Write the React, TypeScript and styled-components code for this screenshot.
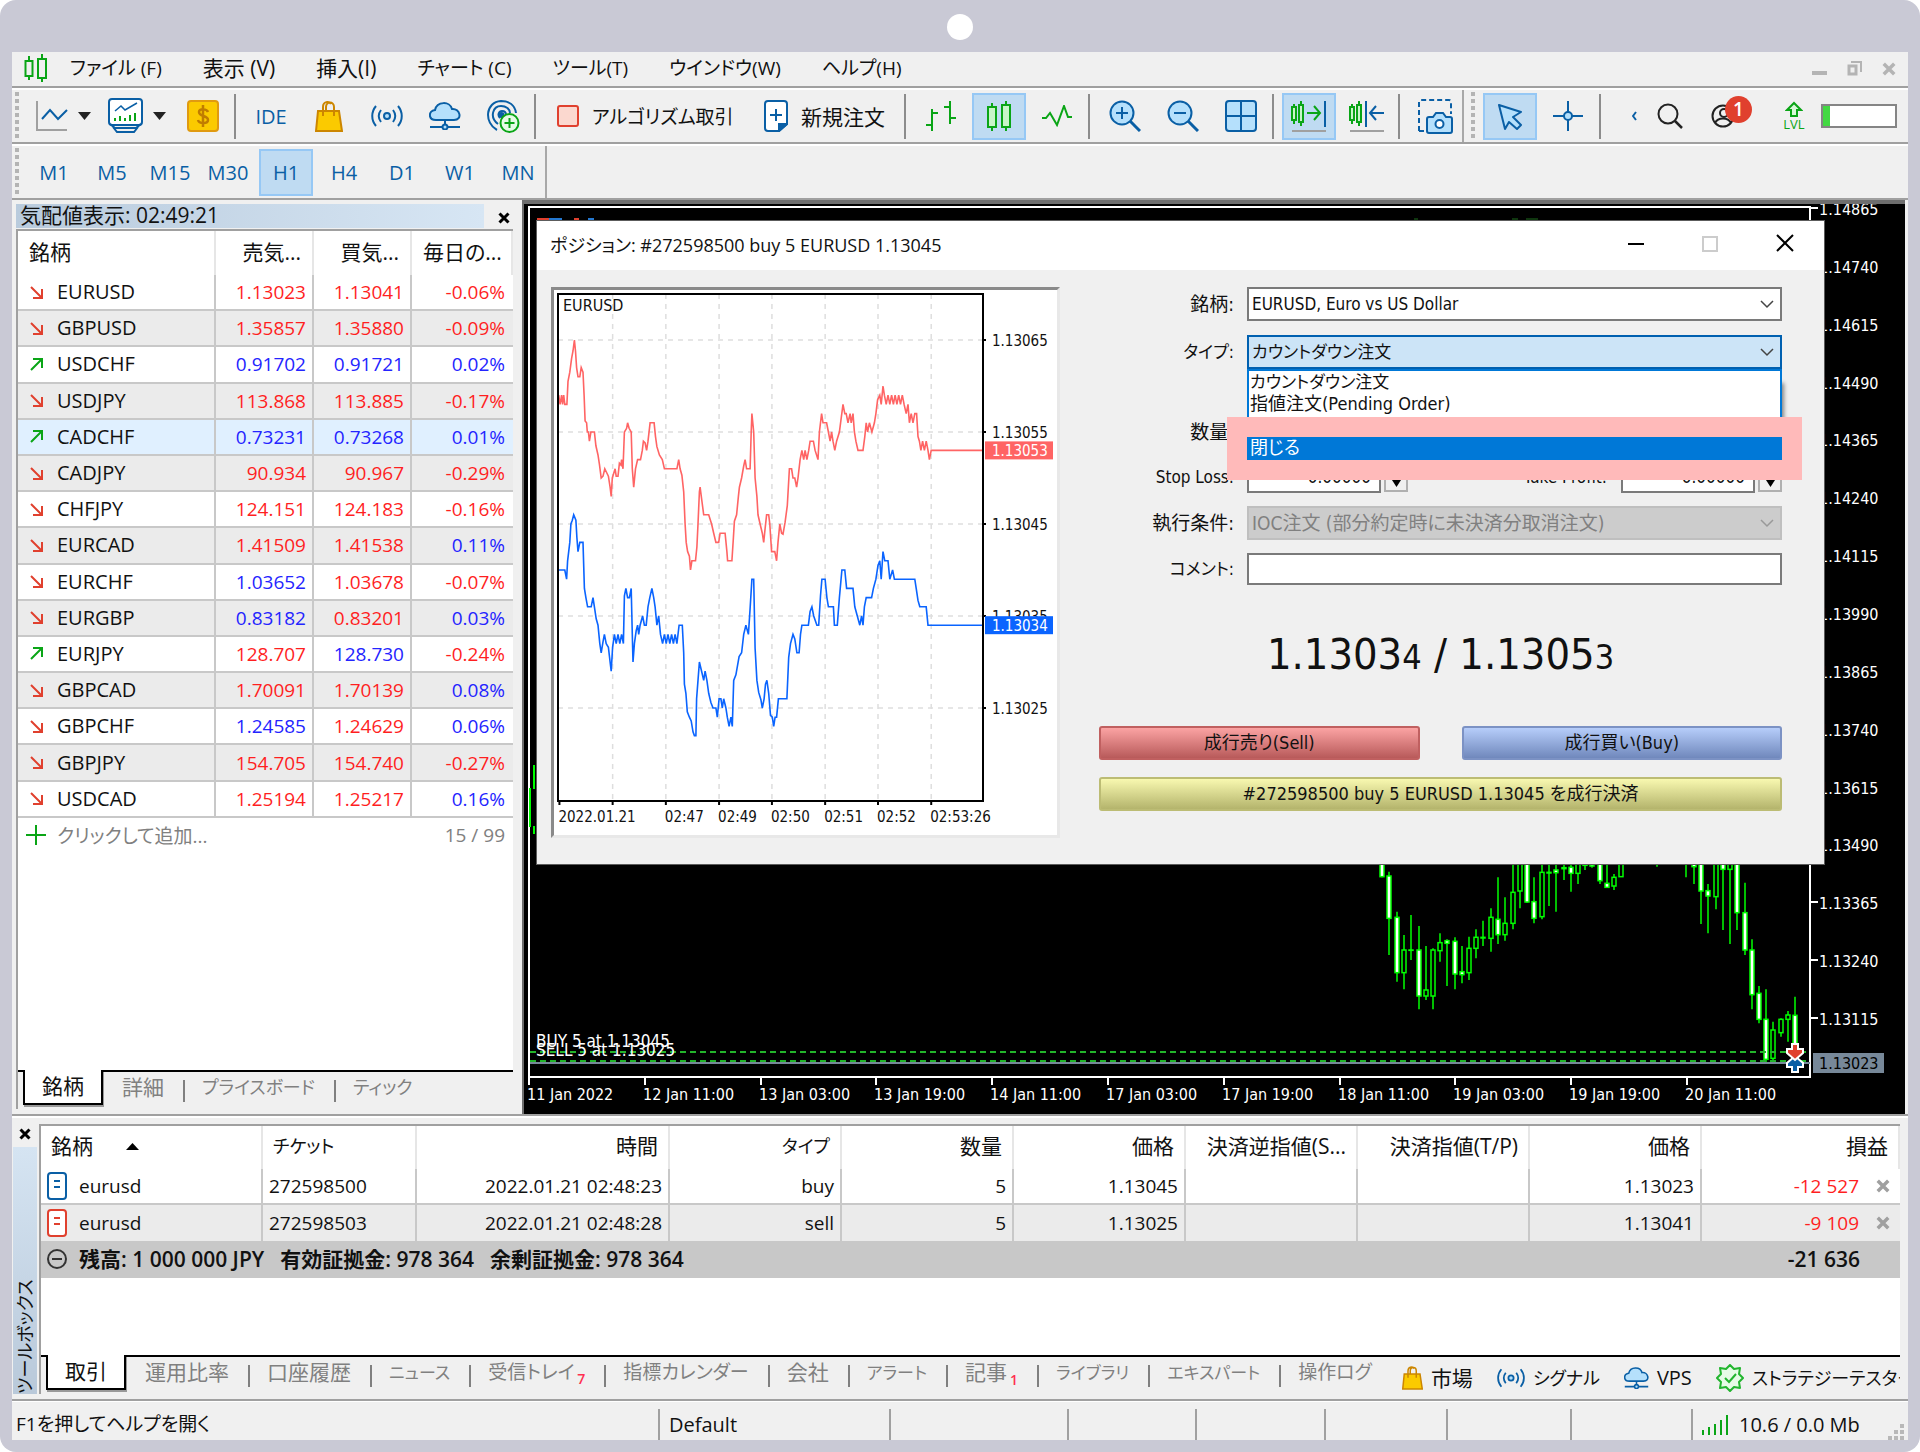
import React, { useState } from 'react';
import styled, { createGlobalStyle, css } from 'styled-components';

const UI_FONT = '"Open Sans", "Noto Sans CJK JP", sans-serif';
const DIALOG_FONT = '"DejaVu Sans Condensed", "Noto Sans", "Noto Sans CJK JP", sans-serif';
const BLUE = '#0a5fa5';
const SKY = '#b5e0fc';
const GREEN = '#0aa516';
const RED = '#e0402e';
const FACE = '#f0f0f0';

/* Kana labels are set smaller than kanji labels, mixed ones in between. */
const labelSize = (text: string, kanaSize = 18) => {
  const kana = /[\u30a0-\u30ff]/.test(text);
  const kanji = /[\u4e00-\u9fff]/.test(text);
  if (kana && kanji) return 19;
  return kana ? kanaSize : 21;
};

const GlobalStyle = createGlobalStyle`
  * { box-sizing: border-box; }
  body { margin: 0; background: #fff; font-family: ${UI_FONT}; font-size: 20px; color: #111; font-feature-settings: "palt"; }
  button, input, select { font: inherit; color: inherit; font-feature-settings: inherit; }
  button { padding: 0; border: 0; background: none; cursor: pointer; }
  ul { margin: 0; padding: 0; list-style: none; }
`;

/* ---------- frame ---------- */

const Device = styled.div`
  display: flex;
  flex-direction: column;
  background: #c9c9d5;
  border-radius: 16px;
  padding: 0 12px 12px;
`;
const Camera = styled.div`
  width: 26px;
  height: 26px;
  margin: 14px auto 12px;
  border-radius: 50%;
  background: #fff;
`;
const Window = styled.main`
  background: ${FACE};
`;

/* ---------- menu ---------- */

const MenuBar = styled.header`
  display: flex;
  align-items: center;
  height: 36px;
  padding: 0 12px 2px;
  border-bottom: 2px solid #a0a0a0;
`;
const MenuNav = styled.nav`
  display: flex;
  flex: 1;
  align-items: center;
  gap: 41px;
  margin-left: 22px;
`;
const MenuItem = styled.button<{ $size: number }>`
  font-size: ${p => p.$size}px;
  line-height: 32px;
  white-space: nowrap;
`;
const WindowControls = styled.div`
  display: flex;
  gap: 20px;
`;

/* ---------- toolbars ---------- */

const ToolBar = styled.div`
  display: flex;
  align-items: center;
  gap: 4px;
  height: 56px;
  border-top: 2px solid #fff;
  border-bottom: 2px solid #a0a0a0;
`;
const Grip = styled.span<{ $compact?: boolean }>`
  width: 4px;
  height: 48px;
  margin: 0 ${p => (p.$compact ? 4 : 9)}px 0 3px;
  background: repeating-linear-gradient(#b4b4b4 0 4px, transparent 4px 7px);
`;
const Divider = styled.span`
  width: 2px;
  height: 45px;
  margin-right: 4px;
  background: #8c8c8c;
`;
const BandEnd = styled.span`
  width: 2px;
  height: 100%;
  margin-left: -4px;
  background: #a8a8a8;
`;
const ToolButton = styled.button<{ $active?: boolean }>`
  display: flex;
  flex: none;
  align-items: center;
  justify-content: center;
  width: 54px;
  height: 47px;
  color: ${BLUE};
  border: 2px solid transparent;
  ${p => p.$active && css`
    background: #bfdbf2;
    border-color: #96c8f5;
  `}
`;
const SplitButton = styled(ToolButton)`
  width: 68px;
  justify-content: flex-start;
  gap: 10px;
  padding-left: 2px;
`;
const TextButton = styled(ToolButton)<{ $width: number; $size: number }>`
  width: ${p => p.$width}px;
  justify-content: flex-start;
  gap: 13px;
  padding-left: 11px;
  color: #111;
  font-size: ${p => p.$size}px;
  white-space: nowrap;
`;
const ToolEnd = styled.div`
  display: flex;
  align-items: center;
  gap: 16px;
  margin-left: auto;
  padding-right: 11px;
`;
const EndButton = styled.button<{ $width: number }>`
  position: relative;
  display: flex;
  align-items: center;
  width: ${p => p.$width}px;
  height: 44px;
  padding-left: ${p => (p.$width > 30 ? 4 : 0)}px;
`;
const Badge = styled.span`
  position: absolute;
  left: 18px;
  top: 2px;
  width: 27px;
  height: 27px;
  border-radius: 50%;
  background: ${RED};
  color: #fff;
  font-size: 19px;
  font-weight: 600;
  line-height: 27px;
  text-align: center;
`;
const Level = styled.span`
  display: flex;
  flex-direction: column;
  align-items: center;
  width: 22px;
  color: ${GREEN};
  font-size: 13px;
  line-height: 14px;
`;
const Meter = styled.span`
  width: 76px;
  height: 24px;
  border: 2px solid #858585;
  background: linear-gradient(90deg, #43d943 7px, #fff 7px);
`;

/* ---------- workspace ---------- */

const Workspace = styled.div`
  display: grid;
  grid-template-columns: 510px 1fr;
  height: 916px;
  padding-right: 3px;
  border-bottom: 2px solid #a0a0a0;
`;
const Panel = styled.section`
  display: flex;
  flex-direction: column;
  min-width: 0;
  padding: 3px 9px 5px 4px;
`;
const PanelTitle = styled.div`
  display: flex;
  align-items: center;
  justify-content: space-between;
  height: 26px;
  padding-right: 3px;
`;
const PanelName = styled.h2`
  flex: 1;
  margin: 0 14px 0 0;
  padding: 0 0 2px 4px;
  font-size: 21px;
  font-weight: 400;
  line-height: 22px;
  background: linear-gradient(90deg, #b9cbdd, #d7e6f4);
`;
const PanelBody = styled.div`
  display: flex;
  flex: 1;
  flex-direction: column;
  min-height: 0;
  background: #fff;
  border-left: 2px solid #a0a0a0;
  border-top: 2px solid #a0a0a0;
`;
const Quotes = styled.table`
  width: 100%;
  height: 587px;
  table-layout: fixed;
  border-collapse: separate;
  border-spacing: 0;
  th {
    height: 44px;
    padding: 0 11px 3px;
    border-right: 2px solid #e6e6e6;
    font-size: 21px;
    font-weight: 400;
    line-height: 28px;
    text-align: right;
    white-space: nowrap;
  }
  th:first-child { text-align: left; }
  td {
    padding: 0 6px;
    border-right: 2px solid #c8c8c8;
    border-bottom: 2px solid #c8c8c8;
    line-height: 24px;
    text-align: right;
    font-size: 19px;
  }
  td:first-child { padding-left: 11px; text-align: left; font-size: 20px; }
  td:last-child { padding-right: 8px; border-right: 0; }
`;
const QuoteRow = styled.tr<{ $tone: string }>`
  background: ${p => p.$tone};
`;
const Num = styled.td<{ $up: boolean }>`
  color: ${p => (p.$up ? '#2424ff' : '#ff1f1f')};
`;
const Symbol = styled.span`
  display: flex;
  align-items: center;
  gap: 13px;
`;
const AddRow = styled.div`
  display: flex;
  align-items: center;
  justify-content: space-between;
  height: 36px;
  padding: 0 8px 2px;
  color: #808080;
  font-size: 19px;
`;
const AddButton = styled.button`
  display: flex;
  align-items: center;
  gap: 11px;
`;
const TabBar = styled.div`
  display: flex;
  align-items: flex-start;
  height: 39px;
  margin-top: auto;
  padding-left: 5px;
  background: ${FACE};
  box-shadow: inset 0 2px #000;
`;
const Tab = styled.button<{ $size: number; $active?: boolean; $bar?: boolean }>`
  height: 35px;
  padding: 0 19px;
  color: #808080;
  font-size: ${p => p.$size}px;
  line-height: 31px;
  white-space: nowrap;
  background: ${p => (p.$bar ? 'linear-gradient(#808080, #808080) 0 10px / 2px 22px no-repeat' : 'none')};
  ${p => p.$active && css`
    color: #111;
    padding: 0 17px;
    background: #fff;
    border: 2px solid #000;
    border-top: 0;
    box-shadow: 1px 2px #999;
  `}
`;
const Count = styled.sub`
  color: #ff2f50;
  font-size: 14px;
  font-weight: 600;
  line-height: 0;
  margin-left: 3px;
`;

/* ---------- chart and dialog ---------- */

const ChartWindow = styled.section`
  position: relative;
  min-width: 0;
  background: #000;
  border: 4px solid #6e6e6e;
  border-width: 4px 0 0 2px;
`;
const ChartCanvas = styled.svg`
  display: block;
  width: 100%;
  height: 100%;
`;
const Dialog = styled.section`
  position: absolute;
  left: 12px;
  right: 80px;
  top: 16px;
  height: 645px;
  background: ${FACE};
  border: 1px solid #5c5c5c;
  font-family: ${DIALOG_FONT};
  font-size: 17px;
`;
const DialogTitle = styled.div`
  display: flex;
  align-items: center;
  height: 49px;
  padding: 0 30px 0 13px;
  background: #fff;
  font-family: ${UI_FONT};
  h2 {
    flex: 1;
    margin: 0;
    padding-bottom: 2px;
    font-size: 18px;
    font-weight: 400;
    line-height: 24px;
  }
`;
const DialogControls = styled.div`
  display: flex;
  gap: 58px;
`;
const DialogBody = styled.div`
  display: grid;
  grid-template-columns: 509px 1fr;
  gap: 39px;
  padding: 17px 42px 22px 14px;
`;
const TickPanel = styled.div`
  height: 551px;
  background: #fff;
  border: 3px solid #8a8a8a;
  border-right-color: #e8e8e8;
  border-bottom-color: #e8e8e8;
`;
const Form = styled.form`
  display: flex;
  flex-direction: column;
`;
const Fields = styled.div`
  display: flex;
  flex-direction: column;
  gap: 14px;
`;
const LowerFields = styled(Fields)`
  margin-top: 47px;
  gap: 13px;
`;
const Field = styled.div`
  position: relative;
  display: grid;
  grid-template-columns: 135px 1fr;
  column-gap: 13px;
  align-items: center;
`;
const FieldLabel = styled.label<{ $kanji?: boolean }>`
  font-size: ${p => (p.$kanji ? 19 : 17)}px;
  line-height: 26px;
  text-align: right;
  white-space: nowrap;
`;
const LevelFields = styled.div`
  display: flex;
  align-items: center;
  justify-content: space-between;
`;
const Spin = styled.div`
  display: flex;
  align-items: center;
  gap: 3px;
  label { margin-right: 11px; }
`;
const control = css`
  width: 100%;
  height: 34px;
  padding: 0 3px;
  border: 2px solid #7a7a7a;
  border-radius: 0;
  background: #fff;
  outline: 0;
`;
const SelectBox = styled.div<{ $open?: boolean; $disabled?: boolean }>`
  display: grid;
  align-items: center;
  > * { grid-area: 1 / 1; }
  svg { justify-self: end; margin-right: 8px; pointer-events: none; }
  select {
    ${control}
    appearance: none;
    ${p => p.$open && css`
      background: #cce4f7;
      border-color: #0060b0;
    `}
    ${p => p.$disabled && css`
      background: #cccccc;
      border-color: #bfbfbf;
      color: #808080;
      opacity: 1;
      font-size: 19px;
    `}
  }
`;
const TextInput = styled.input`
  ${control}
  height: 32px;
`;
const NumberInput = styled(TextInput)`
  width: 134px;
  padding-right: 8px;
  text-align: right;
`;
const StepButton = styled.button`
  display: flex;
  align-items: flex-end;
  justify-content: center;
  width: 24px;
  height: 30px;
  padding-bottom: 3px;
  border: 2px solid #b0b0b0;
`;
const OptionList = styled.ul`
  position: absolute;
  z-index: 2;
  left: 148px;
  right: 0;
  top: 34px;
  background: #fff;
  border: 2px solid #0078d7;
  border-bottom: 0;
  box-shadow: 4px 12px 4px -2px rgba(0, 0, 0, 0.45);
`;
const Option = styled.li<{ $picked?: boolean; $kanji?: boolean }>`
  height: 22px;
  padding-left: 1px;
  font-size: ${p => (p.$kanji ? 18 : 17)}px;
  line-height: 22px;
  ${p => p.$picked && css`
    height: 23px;
    margin: 0 -2px;
    padding-left: 3px;
    background: #0078d7;
    color: #fff;
    box-shadow: 0 0 0 20px #ffbaba;
  `}
`;
const Price = styled.p`
  margin: 45px 0 48px;
  font-size: 43px;
  line-height: 48px;
  text-align: center;
  white-space: pre;
  small { font-size: 34px; line-height: 0; }
`;
const DealButtons = styled.div`
  display: grid;
  grid-template-columns: 1fr 1fr;
  gap: 17px 42px;
`;
const DealButton = styled.button<{ $from: string; $to: string; $edge: string; $wide?: boolean }>`
  height: 34px;
  grid-column: ${p => (p.$wide ? '1 / -1' : 'auto')};
  border: 2px solid ${p => p.$edge};
  border-radius: 3px;
  background: linear-gradient(${p => p.$from}, ${p => p.$to});
  font-size: 18px;
  line-height: 28px;
`;

/* ---------- toolbox ---------- */

const Toolbox = styled.section`
  display: flex;
  height: 285px;
  padding: 6px 8px 5px 1px;
  border-top: 2px solid #fff;
  border-bottom: 2px solid #a0a0a0;
`;
const ToolboxSide = styled.div`
  display: flex;
  flex-direction: column;
  align-items: center;
  width: 24px;
  margin-right: 2px;
`;
const SideClose = styled.button`
  height: 23px;
  padding-bottom: 3px;
  line-height: 0;
`;
const SideTitle = styled.div`
  flex: 1;
  width: 24px;
  background: linear-gradient(#b9c9da, #d5e4f2);
  writing-mode: vertical-rl;
  text-orientation: sideways;
  transform: rotate(180deg);
  font-size: 18px;
  line-height: 24px;
`;
const ToolboxBody = styled(PanelBody)`
  min-width: 0;
`;
const Trades = styled.table`
  width: 100%;
  table-layout: fixed;
  border-collapse: separate;
  border-spacing: 0;
  th {
    height: 43px;
    padding: 0 10px 3px;
    border-right: 2px solid #e6e6e6;
    font-weight: 400;
    line-height: 28px;
    text-align: right;
    white-space: nowrap;
  }
  td {
    height: 36px;
    padding: 0 6px;
    border-right: 2px solid #c8c8c8;
    font-size: 19px;
    line-height: 24px;
    text-align: right;
    white-space: nowrap;
  }
  th:nth-child(-n + 2), td:nth-child(-n + 2) { text-align: left; }
  tbody tr:first-child td { border-bottom: 2px solid #c8c8c8; }
  tbody tr:nth-child(2) { background: #ebebeb; }
  td:last-child { border-right: 0; color: #ff1f1f; padding-right: 10px; }
`;
const HeadCell = styled.th<{ $size: number }>`
  font-size: ${p => p.$size}px;
`;
const Profit = styled.span`
  display: flex;
  align-items: center;
  justify-content: flex-end;
  gap: 17px;
`;
const Heading = styled.span`
  display: flex;
  align-items: center;
  gap: 33px;
`;
const Ticket = styled.span`
  display: flex;
  align-items: center;
  gap: 12px;
`;
const Balance = styled.div`
  display: flex;
  align-items: center;
  gap: 16px;
  height: 37px;
  padding: 0 40px 2px 6px;
  background: #c8c8c8;
  font-size: 21px;
  font-weight: 600;
  line-height: 32px;
  white-space: nowrap;
  svg { margin-right: -4px; }
  strong { margin-left: auto; font-weight: 600; }
`;
const Services = styled.div`
  display: flex;
  flex: 1;
  gap: 24px;
  min-width: 0;
  margin-left: 11px;
  padding-top: 9px;
  overflow: hidden;
`;
const Service = styled.a<{ $size: number }>`
  display: flex;
  flex: none;
  align-items: center;
  gap: 8px;
  color: #111;
  font-size: ${p => p.$size}px;
  line-height: 28px;
  text-decoration: none;
  white-space: nowrap;
`;

const StatusBar = styled.footer`
  display: flex;
  align-items: stretch;
  height: 39px;
  padding-top: 7px;
  border-top: 1px solid #fff;
  line-height: 31px;
  white-space: nowrap;
`;
const StatusText = styled.span`
  flex: 1;
  padding-left: 4px;
  font-size: 19px;
`;
const StatusCell = styled.span<{ $width: number }>`
  display: flex;
  align-items: center;
  gap: 11px;
  width: ${p => p.$width}px;
  padding: 0 4px 0 9px;
  border-left: 2px solid #a0a0a0;
`;
const ResizeDots = styled.svg`
  align-self: flex-end;
  margin-left: auto;
`;

/* ---------- icons ---------- */

type IconProps = { w: number; h?: number; box?: string; children: React.ReactNode };
const Icon = ({ w, h, box, children }: IconProps) => (
  <svg width={w} height={h ?? w} viewBox={box ?? `0 0 ${w} ${h ?? w}`} fill="none" stroke={BLUE} strokeWidth={2} aria-hidden="true">
    {children}
  </svg>
);

const Caret = () => (
  <Icon w={13} h={8}><path d="M0 0h13L6.500 8z" fill="#222" stroke="none" /></Icon>
);
const CandleLogo = () => (
  <Icon w={24} h={28}>
    <g stroke={GREEN}><path d="M5 2v5M5 22v4M18 0v5M18 24v4" /><path d="M1.500 7h7v15h-7z" /><path d="M14 5h8v19h-8z" /></g>
  </Icon>
);
const LineChartIcon = () => (
  <Icon w={32} h={32}>
    <path d="M1 1v29h30" stroke="#a0a0a0" /><path d="M6 19l8-9 8 9 9-9" />
  </Icon>
);
const ScreenIcon = () => (
  <Icon w={35} h={36}>
    <rect x="1" y="1" width="33" height="26" rx="3" fill="#fff" />
    <path d="M2 26l5 4h21l5-4M5 29l4 5h17l4-5" />
    <path d="M7 13l6-5 4 4 12-7" strokeWidth={1.500} />
    <path d="M7 20v3M12 18v5M17 20v3M22 17v6M27 15v8" stroke={GREEN} />
  </Icon>
);
const DollarIcon = () => (
  <Icon w={32} h={32}>
    <rect x="1" y="1" width="30" height="30" rx="3" fill="#fbca00" stroke="#e09a10" />
    <path d="M21 12c-1-3-9-4-9 0 0 5 9 3 9 8 0 4-9 4-10 0M16 5v22" stroke="#c07c00" strokeWidth={2.500} />
  </Icon>
);
const BagIcon = ({ size = 31 }: { size?: number }) => (
  <Icon w={size - 3} h={size} box="0 0 28 31">
    <path d="M3 10h21l3 20H1z" fill="#fbca00" stroke="#cc8600" />
    <path d="M8 15V6c0-6 6-6 8-3M11 10V6c0-6 8-6 8 0v9" stroke="#cc8600" />
  </Icon>
);
const SignalIcon = ({ size = 32 }: { size?: number }) => (
  <Icon w={size} h={Math.round(size * 0.7)} box="0 0 32 22">
    <circle cx="16" cy="11" r="3" fill={SKY} />
    <path d="M10 5c-3 4-3 8 0 12M22 5c3 4 3 8 0 12M5 1c-5 6-5 14 0 20M27 1c5 6 5 14 0 20" />
  </Icon>
);
const CloudIcon = ({ size = 32 }: { size?: number }) => (
  <Icon w={size} h={Math.round(size * 0.88)} box="0 0 32 28">
    <path d="M7 18c-8 0-8-9-1-10C8-1 21-1 23 7c8-1 11 11 2 11z" fill={SKY} />
    <path d="M16 18v5M1 25h12M19 25h12" /><circle cx="16" cy="25" r="2.500" fill={SKY} />
  </Icon>
);
const RadarIcon = () => (
  <Icon w={34} h={34}>
    <path d="M11 31C-2 24-1 3 15 2c8 0 14 4 15 12M12 25C3 18 7 7 15 7c5 0 9 3 9 7M14 19c-3-3-1-7 2-7 3 0 4 2 4 4" />
    <circle cx="15.500" cy="16" r="2" fill={BLUE} />
    <circle cx="23.500" cy="24" r="9" fill="#e6fbe6" stroke={GREEN} /><path d="M23.500 19v10M18.500 24h10" stroke={GREEN} />
  </Icon>
);
const StopIcon = () => (
  <Icon w={22}><rect x="1" y="1" width="20" height="20" rx="2" fill="#fbd8cf" stroke={RED} /></Icon>
);
const NewOrderIcon = () => (
  <Icon w={24} h={32}>
    <path d="M4 1h16q3 0 3 3v20l-8 7H4q-3 0-3-3V4q0-3 3-3z" fill="#fff" />
    <path d="M23 24h-8v7z" fill={BLUE} /><path d="M12 9v12M6 15h12" />
  </Icon>
);
const BarsIcon = () => (
  <Icon w={32} h={32}>
    <g stroke={GREEN}><path d="M7 9v22M7 13h6M1 25h6M25 1v23M19 7h6M25 18h6" /></g>
  </Icon>
);
const CandlesIcon = () => (
  <Icon w={26} h={32}>
    <g stroke={GREEN} fill="#c8f5c8"><path d="M6 3v28M20 1v30" /><path d="M2 7h8v20H2zM16 5h8v22h-8z" /></g>
  </Icon>
);
const WaveIcon = () => (
  <Icon w={32} h={22}><path d="M1 13h4l4-5 7 12L23 1l4 11h4" stroke={GREEN} /></Icon>
);
const ZoomIcon = ({ plus }: { plus?: boolean }) => (
  <Icon w={32} h={32}>
    <circle cx="13" cy="13" r="11.500" fill={SKY} /><path d="M21 21l10 10" strokeWidth={3} /><path d={plus ? 'M13 7v12M7 13h12' : 'M7 13h12'} />
  </Icon>
);
const GridIcon = () => (
  <Icon w={32} h={32}><rect x="1" y="1" width="30" height="30" rx="3" fill={SKY} /><path d="M16 1v30M1 16h30" /></Icon>
);
const ShiftIcon = ({ back }: { back?: boolean }) => (
  <Icon w={36} h={34}>
    <g stroke={GREEN}><path d="M3 5v20M10 2v25" /><path d="M1 8h4v13H1zM8 6h4v17H8z" fill="#c8f5c8" /></g>
    {back
      ? <path d="M17 2v26M21 14h14M27 7l-6 7 6 7" />
      : <><path d="M34 2v26" /><path d="M16 14h13M23 7l6 7-6 7" stroke={GREEN} /></>}
    <path d="M1 32h34" stroke="#a0a0a0" />
  </Icon>
);
const CameraIcon = () => (
  <Icon w={36} h={36}>
    <path d="M2 33V4q0-2 2-2h28q2 0 2 2v12M2 33h6" strokeDasharray="5 3" />
    <path d="M12 19h4l3-4h7l3 4h4q2 0 2 2v12q0 2-2 2H12q-2 0-2-2V21q0-2 2-2z" fill={SKY} /><circle cx="22.500" cy="26" r="4" fill="#fff" />
  </Icon>
);
const PointerIcon = () => (
  <Icon w={26} h={28}><path d="M2 3l22 7-8 5 8 8-4 4-8-7-4 7z" fill={SKY} strokeLinejoin="round" /></Icon>
);
const CrossIcon = () => (
  <Icon w={32} h={32}><path d="M16 1v11M16 20v11M1 16h11M20 16h11" /><circle cx="16" cy="16" r="4" fill={SKY} /></Icon>
);
const CloseIcon = ({ color = '#000', size = 12 }: { color?: string; size?: number }) => (
  <Icon w={size} h={size} box="0 0 12 12"><path d="M1.500 1.500l9 9M10.500 1.500l-9 9" stroke={color} strokeWidth={3} /></Icon>
);
const TrendIcon = ({ up }: { up?: boolean }) => (
  <Icon w={15} h={15}>
    {up
      ? <path d="M2 13L13 2M4 2h9v9" stroke={GREEN} />
      : <path d="M2 2l11 11M13 4v9H4" stroke={RED} />}
  </Icon>
);
const TicketIcon = ({ color }: { color: string }) => (
  <Icon w={20} h={28}><rect x="1" y="1" width="18" height="26" rx="3" fill="#fff" stroke={color} /><path d="M7 9h6M7 15h6" stroke={color} /></Icon>
);
const Chevron = ({ color = '#444' }: { color?: string }) => (
  <Icon w={14} h={9}><path d="M1 1l6 6 6-6" stroke={color} strokeWidth={1.500} /></Icon>
);
const SealIcon = () => (
  <Icon w={28} h={28}>
    <path d="M14 1l4 4 6-1-1 6 4 4-4 4 1 6-6-1-4 4-4-4-6 1 1-6-4-4 4-4-1-6 6 1z" fill="#e6fbe6" stroke="#22b52e" strokeLinejoin="round" />
    <path d="M9 14l4 4 7-8" stroke="#22b52e" />
  </Icon>
);

/* ---------- tick chart ---------- */

type Pair = [number, number];
const zigzag = (from: number, to: number, a: number, b: number): Pair[] => {
  const out: Pair[] = [];
  for (let t = from, i = 0; t <= to; t += 5, i += 1) out.push([t, i % 2 ? b : a]);
  return out;
};

const ask: Pair[] = [
  [80, 59], [84, 58], [88, 59], [91, 58], [94, 59], [97, 58], [103, 58], [106, 60.5], [111, 61.5], [116, 63], [120, 63.8], [124, 65], [127, 63.8],
  [130, 62], [134, 61], [139, 61], [143, 62], [148, 61.5], [151, 59], [154, 56.2], [158, 56], [160, 55], [163, 55], [166, 54], [170, 55], [180, 55],
  [184, 53.5], [190, 52.5], [194, 51.5], [199, 50], [204, 50.2], [209, 51], [214, 50.6], [219, 50.2], [224, 49], [227, 48], [230, 50], [238, 51],
  [241, 50.2], [246, 50.2], [250, 51.6], [254, 51.4], [256, 52], [260, 51], [264, 55], [270, 55.4], [273, 56], [277, 55.4], [283, 55], [286, 51],
  [290, 49], [295, 51], [301, 52], [309, 52], [314, 53], [317, 54], [322, 53.8], [326, 53], [330, 54], [336, 56], [347, 56], [351, 54.5],
  [355, 53.4], [362, 52.5], [370, 52], [376, 51], [411, 51], [416, 52], [420, 51], [425, 50.3], [430, 48.5], [434, 45], [437, 43], [441, 42],
  [446, 41.5], [449, 40], [453, 41], [463, 41], [467, 42.5], [470, 45], [474, 48.5], [476, 49], [481, 47.5], [486, 46], [500, 46], [508, 45],
  [514, 44], [520, 43], [528, 43], [532, 44], [546, 44], [551, 42], [553, 41], [565, 41], [569, 43.5], [572, 45.3], [578, 46], [583, 48], [586, 49],
  [592, 50], [598, 51.3], [602, 52], [606, 51], [616, 51], [619, 55], [621, 57], [626, 55], [630, 50], [635, 48], [638, 46], [644, 45], [650, 44],
  [654, 43], [658, 44.5], [662, 46], [668, 46], [671, 45], [676, 42], [685, 42], [690, 41], [694, 43], [699, 45], [704, 44], [708, 43.9],
  [714, 45.2], [720, 47], [726, 51], [732, 51], [736, 50], [741, 50], [746, 49], [750, 50], [756, 52], [761, 53], [766, 52], [770, 53], [775, 52],
  [780, 53], [784, 54], [793, 54], [798, 53], [806, 52], [810, 55], [816, 57], [820, 56], [830, 56], [835, 55], [840, 54], [844, 55], [848, 54],
  [853, 53], [858, 54], [866, 55], [871, 56.5], [876, 58], [881, 57], [885, 57], [890, 56], [896, 57], [899, 56], [904, 57], [908, 55], [912, 54],
  [918, 53], [932, 53], [937, 54.5], [941, 56], [945, 55], [950, 56], [957, 55], [964, 56], [968, 57], [973, 58.5], [979, 59], [983, 58], [988, 60],
  ...zigzag(992, 1047, 59, 58), [1053, 57], [1058, 58], [1062, 56], [1067, 57], [1072, 56], [1077, 57], [1082, 57], [1086, 54.5], [1090, 54],
  [1094, 53], [1099, 54], [1104, 53], [1109, 54], [1114, 53], [1118, 52], [1123, 53], [1268, 53],
];

const bid: Pair[] = [
  [80, 40], [97, 40], [102, 39], [105, 41], [111, 43], [114, 45], [118, 45.4], [122, 46], [128, 45.4], [131, 43.5], [134, 42], [139, 43], [148, 43],
  [152, 38], [156, 37], [161, 36], [171, 36], [176, 37], [180, 36], [185, 34.7], [190, 34], [195, 32], [199, 31], [204, 32.2], [208, 33], [213, 32],
  [219, 31.6], [224, 30], [227, 29], [231, 31.6], [236, 33], [241, 32], [246, 33], [251, 32], [256, 33], [261, 32], [264, 37.2], [268, 38], [273, 37],
  [278, 37], [283, 38], [286, 33], [288, 30], [292, 32], [297, 33.4], [301, 34], [304, 33], [308, 34], [315, 35], [320, 34], [325, 34], [330, 36],
  [335, 37], [341, 38], [346, 37], [350, 36], [355, 34], [360, 35], [365, 33], ...zigzag(371, 411, 32, 33), [417, 34], [426, 34], [430, 31],
  [432, 27.6], [436, 26.6], [440, 24.6], [446, 24], [451, 23.6], [456, 22.4], [460, 22], [464, 22], [466, 26], [470, 28], [474, 30], [480, 29],
  [486, 28], [490, 29], [495, 28], [500, 26.6], [506, 25.6], [512, 25], [520, 25], [524, 24], [529, 26], [534, 26], [538, 25], [542, 26], [548, 25],
  [552, 24], [557, 23], [562, 24], [566, 23], [570, 28], [576, 28.6], [585, 30.6], [592, 31], [598, 33], [604, 34], [611, 33], [616, 35.8],
  [621, 39], [626, 39], [630, 31.5], [635, 28], [640, 26.7], [646, 25.9], [650, 25], [655, 26], [659, 27.6], [663, 28], [668, 26.6], [673, 24.2],
  [678, 24], [682, 23], [686, 24], [690, 24], [695, 26], [719, 26], [724, 30.5], [729, 32], [736, 33], [741, 32.5], [747, 31], [753, 31], [757, 33],
  [761, 34], [779, 34], [784, 35.5], [789, 36], [794, 35], [803, 34], [808, 34], [813, 37.2], [817, 39], [826, 39], [831, 37], [835, 36], [849, 36],
  [852, 34], [860, 34], [866, 37], [873, 40], [881, 40], [886, 38], [904, 38], [909, 36], [916, 35], [923, 34], [928, 35], [932, 34], [936, 36],
  [941, 37], [956, 37], [961, 38], [968, 39], [974, 40.5], [979, 41], [983, 39], [988, 42], [993, 41], [1002, 41], [1007, 39], [1015, 40],
  [1020, 39], [1077, 39], [1081, 38], [1086, 36.7], [1091, 36], [1109, 36], [1114, 34], [1268, 34],
];

const tickX = (t: number) => 4 + ((t - 78) * 425) / 1190;
const tickY = (p: number) => 50 + (65 - p) * 9.2;
const tickLine = (pts: Pair[]) => pts.map(([t, p]) => `${tickX(t).toFixed(1)},${tickY(p).toFixed(1)}`).join(' ');
const tickTimes: [number, string][] = [
  [82, '2022.01.21'], [231, ''], [380, '02:47'], [529, '02:49'], [677, '02:50'], [826, '02:51'], [974, '02:52'], [1123, '02:53:26'],
];

const TickChart = () => (
  <svg width="100%" height="100%" viewBox="0 0 503 545" preserveAspectRatio="xMinYMin" fontSize={15} fill="#111" role="img" aria-label="EURUSD">
    <g stroke="#dedede" strokeWidth={1.500} strokeDasharray="5 5">
      {tickTimes.slice(1).map(([t]) => <path key={t} d={`M${tickX(t)} 4V511`} />)}
      {[65, 55, 45, 35, 25].map(p => <path key={p} d={`M4 ${tickY(p)}H429`} />)}
    </g>
    <polyline points={tickLine(ask)} fill="none" stroke="#ff6464" strokeWidth={1.600} />
    <polyline points={tickLine(bid)} fill="none" stroke="#0a64ff" strokeWidth={1.600} />
    <rect x="4" y="4" width="425" height="507" fill="none" stroke="#000" strokeWidth={2} />
    <text x="9" y="21" fontSize={16}>EURUSD</text>
    {[65, 55, 45, 35, 25].map(p => (
      <g key={p}><path d={`M429 ${tickY(p)}h3`} stroke="#000" strokeWidth={2} /><text x="438" y={tickY(p) + 6}>{`1.130${p}`}</text></g>
    ))}
    <rect x="431" y={tickY(53) - 9} width="68" height="18" fill="#ff6464" />
    <text x="438" y={tickY(53) + 6} fill="#fff">1.13053</text>
    <rect x="431" y={tickY(34) - 9} width="68" height="18" fill="#0a64ff" />
    <text x="438" y={tickY(34) + 6} fill="#fff">1.13034</text>
    {tickTimes.map(([t, label]) => (
      <g key={t}><path d={`M${tickX(t)} 511v4`} stroke="#000" strokeWidth={2} /><text x={tickX(t) - 1} y="532">{label}</text></g>
    ))}
  </svg>
);

/* ---------- price chart ---------- */

/* [slot, high, low, body top, body bottom, falling] */
type Candle = [number, number, number, number, number, number];
const candles: Candle[] = [
  [587, 780, 832, 780, 830, 1], [600, 815, 1065, 828, 955, 1], [614, 935, 1145, 952, 1118, 1], [627, 1005, 1168, 1050, 1118, 0],
  [640, 945, 1080, 1050, 1051, 0], [654, 978, 1228, 1050, 1188, 1], [667, 1038, 1200, 1170, 1188, 0], [680, 1045, 1228, 1050, 1188, 0],
  [693, 1000, 1085, 1028, 1052, 0], [706, 1018, 1158, 1022, 1030, 1], [720, 1012, 1168, 1024, 1122, 1], [733, 1038, 1150, 1115, 1124, 1],
  [746, 1010, 1140, 1045, 1118, 0], [759, 988, 1075, 1012, 1045, 0], [772, 962, 1038, 1012, 1014, 0], [786, 925, 1055, 952, 1015, 0],
  [799, 832, 1032, 958, 1004, 1], [812, 892, 1022, 970, 1004, 0], [825, 780, 988, 877, 970, 0], [838, 780, 925, 780, 873, 0],
  [852, 780, 908, 780, 906, 1], [865, 832, 970, 905, 955, 1], [878, 780, 958, 817, 950, 0], [891, 780, 918, 817, 819, 0],
  [905, 780, 935, 810, 818, 1], [918, 780, 840, 803, 806, 1], [931, 780, 875, 802, 820, 1], [944, 780, 852, 780, 820, 0],
  [957, 780, 810, 780, 796, 0], [970, 780, 803, 780, 798, 1], [984, 780, 852, 780, 842, 1], [997, 780, 862, 850, 862, 1],
  [1010, 822, 870, 832, 858, 0], [1023, 780, 830, 780, 830, 0], [1089, 780, 800, 780, 790, 0], [1142, 780, 832, 780, 790, 0],
  [1155, 780, 852, 780, 800, 1], [1168, 780, 972, 780, 873, 1], [1182, 852, 1000, 872, 888, 1], [1195, 780, 928, 780, 890, 0],
  [1208, 780, 990, 780, 808, 1], [1221, 780, 1032, 780, 808, 0], [1235, 780, 990, 780, 938, 1], [1248, 848, 1065, 938, 1050, 1],
  [1261, 1018, 1228, 1050, 1184, 1], [1274, 1158, 1270, 1180, 1258, 1], [1287, 1168, 1390, 1258, 1378, 1], [1300, 1265, 1380, 1290, 1375, 0],
  [1314, 1255, 1310, 1258, 1298, 0], [1327, 1233, 1325, 1245, 1258, 0], [1340, 1190, 1350, 1246, 1345, 1],
];
const slotX = (s: number) => Math.round(536 + s / 1.823);
const levelY = (v: number) => 396 + v / 3;
const prices = Array.from({ length: 15 }, (_, i) => (1.14865 - i * 0.00125).toFixed(5));
const dates = ['11 Jan 2022', '12 Jan 11:00', '13 Jan 03:00', '13 Jan 19:00', '14 Jan 11:00', '17 Jan 03:00', '17 Jan 19:00', '18 Jan 11:00', '19 Jan 03:00', '19 Jan 19:00', '20 Jan 11:00'];
const arrow = 'M-3 -9h6v5h5v4l-8 7-8-7v-4h5z';

const PriceChart = () => (
  <ChartCanvas viewBox="0 0 1381 910" preserveAspectRatio="xMaxYMin" fontFamily={DIALOG_FONT} fontSize={16} fill="#fff" role="img" aria-label="EURUSD H1">
    <path d="M5 873V3H1286V873H5" fill="none" stroke="#fff" strokeWidth={2} />
    <path d="M13 15h12M50 15h5" stroke={RED} strokeWidth={2} /><path d="M25 15h13M64 15h6" stroke="#2478d0" strokeWidth={2} />
    <path d="M890 15h4M988 15h6M1002 15h12" stroke="#1c6a1c" strokeWidth={1} />
    {candles.map(([s, hi, lo, top, bottom, falling]) => (
      <g key={s} stroke="#00ff00" strokeWidth={1.500}>
        <path d={`M${slotX(s)} ${levelY(hi)}V${levelY(lo)}`} />
        <rect x={slotX(s) - 2} y={levelY(top)} width={4} height={(bottom - top) / 3} fill={falling ? '#fff' : '#000'} />
      </g>
    ))}
    <path d="M6 584v39M10 561v24M10 622v8" stroke="#00ff00" strokeWidth={2} />
    <g stroke="#23b52b" strokeWidth={2} strokeDasharray="6 4"><path d="M6 848H1286" /><path d="M6 857H1286" /></g>
    <path d="M6 859H1286" stroke="#778899" strokeWidth={2} />
    <g fontSize={17}>
      <text x="12" y="843">BUY 5 at 1.13045</text>
      <text x="12" y="852">SELL 5 at 1.13025</text>
    </g>
    <g stroke="#fff" strokeWidth={2}>
      <path d={arrow} fill={BLUE} transform={`translate(${slotX(1340)} 859) rotate(180)`} />
      <path d={arrow} fill={RED} transform={`translate(${slotX(1340)} 849)`} />
    </g>
    {prices.map((p, i) => (
      <g key={p}>
        <path d={`M1286 ${4 + Math.round(i * 57.86)}h8`} stroke="#fff" strokeWidth={2} />
        <text x="1295" y={11 + Math.round(i * 57.86)}>{p}</text>
      </g>
    ))}
    <rect x="1289" y="849" width="71" height="20" fill="#778899" />
    <text x="1295" y="865" fill="#000">1.13023</text>
    {dates.map((d, i) => (
      <g key={d}>
        <path d={`M${5 + Math.round(i * 115.8)} 873v8`} stroke="#fff" strokeWidth={2} />
        <text x={3 + Math.round(i * 115.8)} y="896">{d}</text>
      </g>
    ))}
  </ChartCanvas>
);

/* ---------- data ---------- */

const menus = ['ファイル (F)', '表示 (V)', '挿入(I)', 'チャート (C)', 'ツール(T)', 'ウインドウ(W)', 'ヘルプ(H)'];
const frames = ['M1', 'M5', 'M15', 'M30', 'H1', 'H4', 'D1', 'W1', 'MN'];

/* symbol, arrow up, bid, bid up, ask, ask up, daily change */
const quotes: [string, boolean, string, boolean, string, boolean, string][] = [
  ['EURUSD', false, '1.13023', false, '1.13041', false, '-0.06%'],
  ['GBPUSD', false, '1.35857', false, '1.35880', false, '-0.09%'],
  ['USDCHF', true, '0.91702', true, '0.91721', true, '0.02%'],
  ['USDJPY', false, '113.868', false, '113.885', false, '-0.17%'],
  ['CADCHF', true, '0.73231', true, '0.73268', true, '0.01%'],
  ['CADJPY', false, '90.934', false, '90.967', false, '-0.29%'],
  ['CHFJPY', false, '124.151', false, '124.183', false, '-0.16%'],
  ['EURCAD', false, '1.41509', false, '1.41538', false, '0.11%'],
  ['EURCHF', false, '1.03652', true, '1.03678', false, '-0.07%'],
  ['EURGBP', false, '0.83182', true, '0.83201', false, '0.03%'],
  ['EURJPY', true, '128.707', false, '128.730', true, '-0.24%'],
  ['GBPCAD', false, '1.70091', false, '1.70139', false, '0.08%'],
  ['GBPCHF', false, '1.24585', true, '1.24629', false, '0.06%'],
  ['GBPJPY', false, '154.705', false, '154.740', false, '-0.27%'],
  ['USDCAD', false, '1.25194', false, '1.25217', false, '0.16%'],
];
const tradeHeads = ['チケット', '時間', 'タイプ', '数量', '価格', '決済逆指値(S...', '決済指値(T/P)', '価格', '損益'];
const trades = [
  { color: BLUE, cells: ['272598500', '2022.01.21 02:48:23', 'buy', '5', '1.13045', '', '', '1.13023'], profit: '-12 527' },
  { color: RED, cells: ['272598503', '2022.01.21 02:48:28', 'sell', '5', '1.13025', '', '', '1.13041'], profit: '-9 109' },
];
const watchTabs = ['詳細', 'プライスボード', 'ティック'];
const tabs: [string, string?][] = [
  ['運用比率'], ['口座履歴'], ['ニュース'], ['受信トレイ', '7'], ['指標カレンダー'], ['会社'], ['アラート'], ['記事', '1'], ['ライブラリ'], ['エキスパート'], ['操作ログ'],
];
const rowTone = (symbol: string, i: number) => (symbol === 'CADCHF' ? '#e0f0ff' : i % 2 ? '#ebebeb' : '#fff');

/* ---------- sections ---------- */

const MainToolbar = () => (
  <ToolBar>
    <Grip />
    <SplitButton aria-label="Chart"><LineChartIcon /><Caret /></SplitButton>
    <SplitButton aria-label="Profiles"><ScreenIcon /><Caret /></SplitButton>
    <ToolButton aria-label="Symbols"><DollarIcon /></ToolButton>
    <Divider />
    <ToolButton>IDE</ToolButton>
    <ToolButton aria-label="Market"><BagIcon /></ToolButton>
    <ToolButton aria-label="Signals"><SignalIcon /></ToolButton>
    <ToolButton aria-label="VPS"><CloudIcon /></ToolButton>
    <ToolButton aria-label="Community"><RadarIcon /></ToolButton>
    <Divider />
    <TextButton $width={203} $size={19}><StopIcon />アルゴリズム取引</TextButton>
    <TextButton $width={149} $size={21}><NewOrderIcon />新規注文</TextButton>
    <Divider />
    <ToolButton aria-label="Bars"><BarsIcon /></ToolButton>
    <ToolButton aria-label="Candles" $active><CandlesIcon /></ToolButton>
    <ToolButton aria-label="Line"><WaveIcon /></ToolButton>
    <Divider />
    <ToolButton aria-label="Zoom in"><ZoomIcon plus /></ToolButton>
    <ToolButton aria-label="Zoom out"><ZoomIcon /></ToolButton>
    <ToolButton aria-label="Tile"><GridIcon /></ToolButton>
    <Divider />
    <ToolButton aria-label="Auto scroll" $active><ShiftIcon /></ToolButton>
    <ToolButton aria-label="Chart shift"><ShiftIcon back /></ToolButton>
    <Divider />
    <ToolButton aria-label="Screenshot"><CameraIcon /></ToolButton>
    <BandEnd />
    <Grip $compact />
    <ToolButton aria-label="Cursor" $active><PointerIcon /></ToolButton>
    <ToolButton aria-label="Crosshair"><CrossIcon /></ToolButton>
    <Divider />
    <ToolEnd>
      <EndButton $width={5} aria-label="More"><Icon w={5} h={10}><path d="M4 1L1 5l3 4" /></Icon></EndButton>
      <EndButton $width={38} aria-label="Search">
        <Icon w={26} h={26}><g stroke="#222"><circle cx="11" cy="11" r="9.500" /><path d="M18 18l7 7" strokeWidth={2.500} /></g></Icon>
      </EndButton>
      <EndButton $width={60} aria-label="Account">
        <Icon w={24} h={24}><g stroke="#222"><circle cx="12" cy="12" r="10.500" /><circle cx="13" cy="9" r="4" /><path d="M4 19c3-6 13-6 16 0" /></g></Icon>
        <Badge>1</Badge>
      </EndButton>
      <Level>
        <Icon w={18} h={16}><path d="M6 15V9H2l7-7 7 7h-4v6z" fill="#d8f8d8" stroke={GREEN} /></Icon>
        LVL
      </Level>
      <Meter />
    </ToolEnd>
  </ToolBar>
);

const MarketWatch = () => (
  <Panel>
    <PanelTitle>
      <PanelName>気配値表示: 02:49:21</PanelName>
      <button aria-label="Close"><CloseIcon /></button>
    </PanelTitle>
    <PanelBody>
      <Quotes>
        <colgroup><col width="198" /><col width="98" /><col width="98" /><col /></colgroup>
        <thead><tr><th>銘柄</th><th>売気...</th><th>買気...</th><th>毎日の...</th></tr></thead>
        <tbody>
          {quotes.map(([symbol, up, b, bUp, a, aUp, change], i) => (
            <QuoteRow key={symbol} $tone={rowTone(symbol, i)}>
              <td><Symbol><TrendIcon up={up} />{symbol}</Symbol></td>
              <Num $up={bUp}>{b}</Num>
              <Num $up={aUp}>{a}</Num>
              <Num $up={!change.startsWith('-')}>{change}</Num>
            </QuoteRow>
          ))}
        </tbody>
      </Quotes>
      <AddRow>
        <AddButton><Icon w={20}><path d="M10 0v20M0 10h20" stroke={GREEN} /></Icon>クリックして追加...</AddButton>
        <span>15 / 99</span>
      </AddRow>
      <TabBar>
        <Tab $size={21} $active>銘柄</Tab>
        {watchTabs.map((name, i) => <Tab key={name} $size={labelSize(name)} $bar={i > 0}>{name}</Tab>)}
      </TabBar>
    </PanelBody>
  </Panel>
);

const StepDown = ({ label }: { label: string }) => (
  <StepButton type="button" aria-label={label}>
    <Icon w={9} h={7}><path d="M0 0h9L4.500 7z" fill="#000" stroke="none" /></Icon>
  </StepButton>
);

const PositionDialog = () => {
  const [comment, setComment] = useState('');
  const [volume, setVolume] = useState('5');
  const [stop, setStop] = useState('0.00000');
  const [take, setTake] = useState('0.00000');
  return (
    <Dialog role="dialog" aria-labelledby="position-title">
      <DialogTitle>
        <h2 id="position-title">ポジション: #272598500 buy 5 EURUSD 1.13045</h2>
        <DialogControls>
          <button aria-label="Minimize"><Icon w={16}><path d="M0 8h16" stroke="#000" /></Icon></button>
          <button aria-label="Maximize" disabled><Icon w={16}><path d="M1 1h14v14H1z" stroke="#ccc" /></Icon></button>
          <button aria-label="Close"><Icon w={18}><path d="M1 1l16 16M17 1L1 17" stroke="#000" /></Icon></button>
        </DialogControls>
      </DialogTitle>
      <DialogBody>
        <TickPanel><TickChart /></TickPanel>
        <Form onSubmit={e => e.preventDefault()}>
          <Fields>
            <Field>
              <FieldLabel $kanji htmlFor="symbol">銘柄:</FieldLabel>
              <SelectBox>
                <select id="symbol"><option>EURUSD, Euro vs US Dollar</option></select>
                <Chevron />
              </SelectBox>
            </Field>
            <Field>
              <FieldLabel htmlFor="type">タイプ:</FieldLabel>
              <SelectBox $open>
                <select id="type"><option>カウントダウン注文</option></select>
                <Chevron />
              </SelectBox>
              <OptionList role="listbox" aria-label="タイプ">
                <Option role="option">カウントダウン注文</Option>
                <Option role="option" $kanji>指値注文(Pending Order)</Option>
                <Option aria-hidden="true" />
                <Option role="option" aria-selected="true" $kanji $picked>閉じる</Option>
              </OptionList>
            </Field>
          </Fields>
          <LowerFields>
            <Field>
              <FieldLabel $kanji htmlFor="volume">数量:</FieldLabel>
              <NumberInput id="volume" value={volume} onChange={e => setVolume(e.target.value)} />
            </Field>
            <Field>
              <FieldLabel htmlFor="stop">Stop Loss:</FieldLabel>
              <LevelFields>
                <Spin>
                  <NumberInput id="stop" value={stop} onChange={e => setStop(e.target.value)} />
                  <StepDown label="Stop Loss" />
                </Spin>
                <Spin>
                  <FieldLabel htmlFor="take">Take Profit:</FieldLabel>
                  <NumberInput id="take" value={take} onChange={e => setTake(e.target.value)} />
                  <StepDown label="Take Profit" />
                </Spin>
              </LevelFields>
            </Field>
            <Field>
              <FieldLabel $kanji htmlFor="fill">執行条件:</FieldLabel>
              <SelectBox $disabled>
                <select id="fill" disabled><option>IOC注文 (部分約定時に未決済分取消注文)</option></select>
                <Chevron color="#999" />
              </SelectBox>
            </Field>
            <Field>
              <FieldLabel htmlFor="comment">コメント:</FieldLabel>
              <TextInput id="comment" value={comment} onChange={e => setComment(e.target.value)} />
            </Field>
          </LowerFields>
          <Price>1.1303<small>4</small> / 1.1305<small>3</small></Price>
          <DealButtons>
            <DealButton type="button" $from="#fba3a3" $to="#b85a5a" $edge="#c06060">成行売り(Sell)</DealButton>
            <DealButton type="button" $from="#b6cdfa" $to="#7088bc" $edge="#7c92c4">成行買い(Buy)</DealButton>
            <DealButton type="button" $from="#f8f8b0" $to="#b4b46c" $edge="#bcbc74" $wide>#272598500 buy 5 EURUSD 1.13045 を成行決済</DealButton>
          </DealButtons>
        </Form>
      </DialogBody>
    </Dialog>
  );
};

const ToolboxPanel = () => (
  <Toolbox>
    <ToolboxSide>
      <SideClose aria-label="Close"><CloseIcon /></SideClose>
      <SideTitle>ツールボックス</SideTitle>
    </ToolboxSide>
    <ToolboxBody>
      <Trades>
        <colgroup>
          <col width="222" /><col width="154" /><col width="253" /><col width="172" /><col width="172" /><col width="172" />
          <col width="172" /><col width="172" /><col width="172" /><col />
        </colgroup>
        <thead>
          <tr>
            <HeadCell $size={21}><Heading>銘柄<Icon w={13} h={7}><path d="M0 7h13L6.500 0z" fill="#000" stroke="none" /></Icon></Heading></HeadCell>
            {tradeHeads.map((h, i) => <HeadCell key={i} $size={labelSize(h)}>{h}</HeadCell>)}
          </tr>
        </thead>
        <tbody>
          {trades.map(t => (
            <tr key={t.cells[0]}>
              <td><Ticket><TicketIcon color={t.color} />eurusd</Ticket></td>
              {t.cells.map((c, i) => <td key={i}>{c}</td>)}
              <td><Profit>{t.profit}<button aria-label="Close position"><CloseIcon color="#a0a0a0" size={14} /></button></Profit></td>
            </tr>
          ))}
        </tbody>
      </Trades>
      <Balance>
        <Icon w={20}><g stroke="#333"><circle cx="10" cy="10" r="9" /><path d="M5 10h10" /></g></Icon>
        <span>残高: 1 000 000 JPY</span>
        <span>有効証拠金: 978 364</span>
        <span>余剰証拠金: 978 364</span>
        <strong>-21 636</strong>
      </Balance>
      <TabBar>
        <Tab $size={21} $active>取引</Tab>
        {tabs.map(([name, count], i) => (
          <Tab key={name} $size={labelSize(name, 17)} $bar={i > 0}>{name}{count && <Count>{count}</Count>}</Tab>
        ))}
        <Services>
          <Service href="#market" $size={21}><BagIcon size={24} />市場</Service>
          <Service href="#signals" $size={18}><SignalIcon size={28} />シグナル</Service>
          <Service href="#vps" $size={20}><CloudIcon size={25} />VPS</Service>
          <Service href="#tester" $size={18}><SealIcon />ストラテジーテスター</Service>
        </Services>
      </TabBar>
    </ToolboxBody>
  </Toolbox>
);

const App = () => {
  const [frame, setFrame] = useState('H1');
  return (
    <>
      <GlobalStyle />
      <Device>
        <Camera />
        <Window>
          <MenuBar>
            <CandleLogo />
            <MenuNav>
              {menus.map(m => <MenuItem key={m} $size={labelSize(m) > 20 ? 21 : 19}>{m}</MenuItem>)}
            </MenuNav>
            <WindowControls>
              <button aria-label="Minimize"><Icon w={15}><path d="M0 12h15" stroke="#b4b4b4" strokeWidth={4} /></Icon></button>
              <button aria-label="Restore"><Icon w={15}><g stroke="#b4b4b4"><path d="M4 1h10v10" /><path d="M2 5h7v8H2z" strokeWidth={3} /></g></Icon></button>
              <button aria-label="Close"><CloseIcon color="#b4b4b4" size={14} /></button>
            </WindowControls>
          </MenuBar>
          <MainToolbar />
          <ToolBar>
            <Grip $compact />
            {frames.map(f => (
              <ToolButton key={f} $active={f === frame} onClick={() => setFrame(f)}>{f}</ToolButton>
            ))}
            <BandEnd />
          </ToolBar>
          <Workspace>
            <MarketWatch />
            <ChartWindow>
              <PriceChart />
              <PositionDialog />
            </ChartWindow>
          </Workspace>
          <ToolboxPanel />
          <StatusBar>
            <StatusText>F1を押してヘルプを開く</StatusText>
            <StatusCell $width={231}>Default</StatusCell>
            <StatusCell $width={178} />
            <StatusCell $width={128} />
            <StatusCell $width={129} />
            <StatusCell $width={122} />
            <StatusCell $width={124} />
            <StatusCell $width={121} />
            <StatusCell $width={217}>
              <Icon w={26} h={20}><path d="M1 20v-5M7 20v-8M13 20V9M19 20V5M25 20V0" stroke={GREEN} /></Icon>
              10.6 / 0.0 Mb
              <ResizeDots width="16" height="16" fill="#b8b8b8" aria-hidden="true">
                <path d="M12 0h4v4h-4zM6 6h4v4H6zM12 6h4v4h-4zM0 12h4v4H0zM6 12h4v4H6zM12 12h4v4h-4z" />
              </ResizeDots>
            </StatusCell>
          </StatusBar>
        </Window>
      </Device>
    </>
  );
};

export default App;
